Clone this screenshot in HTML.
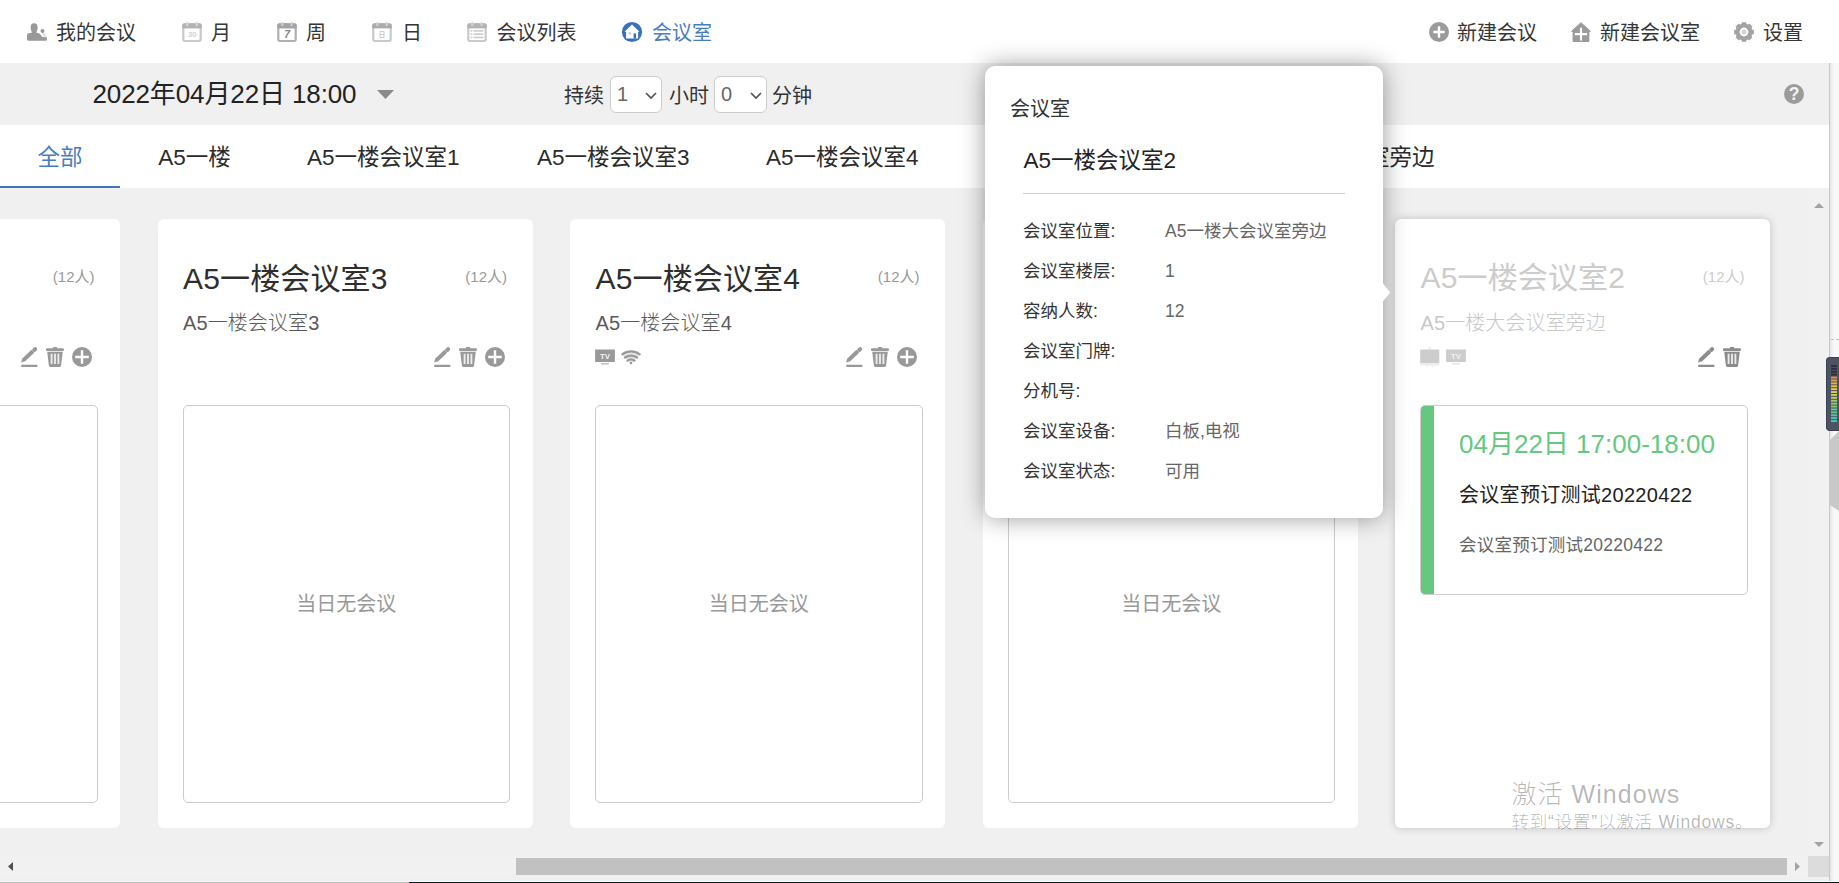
<!DOCTYPE html>
<html lang="zh-CN">
<head>
<meta charset="utf-8">
<title>会议室</title>
<style>
*{box-sizing:border-box;margin:0;padding:0}
html,body{width:1839px;height:883px;overflow:hidden;background:#f0f0f0}
body{font-family:"Liberation Sans","Noto Sans CJK SC",sans-serif;color:#333;position:relative}
svg{display:block;overflow:visible}
#nav{position:absolute;left:0;top:0;width:1839px;height:63px;background:#fff}
.ni{position:absolute;top:0;height:63px;line-height:66px;font-size:20px;color:#363636;white-space:nowrap}
.ni svg{position:absolute;top:22px;left:-29px}
.ni.act{color:#4a7cc0}
#bar{position:absolute;left:0;top:63px;width:1839px;height:62px;background:#f0f0f0}
#date{position:absolute;left:92.5px;top:14px;letter-spacing:-.12px;font-size:26px;line-height:34px;color:#222;white-space:nowrap}
.bt{position:absolute;top:0;height:62px;line-height:66px;font-size:20px;color:#333;white-space:nowrap}
.sel{position:absolute;top:13px;height:37px;border:1px solid #ccc;border-radius:6px;background:#fff;font-size:20px;line-height:35px;color:#666;padding-left:6px}
.sel svg{position:absolute;top:14.5px;right:4.5px}
#tabs{position:absolute;left:0;top:125px;width:1829px;height:63px;background:#fff}
.tab{position:absolute;top:0;height:63px;line-height:65px;font-size:22.5px;color:#2b2b2b;white-space:nowrap}
.tab.act{color:#4a7cc0}
#tabline{position:absolute;left:0;top:60.5px;width:120px;height:2.5px;background:#3f74bd}
.card{position:absolute;top:219px;width:375px;height:609px;background:#fff;border-radius:6px}
.card h2{position:absolute;left:25.5px;letter-spacing:.15px;top:38px;font-size:30px;line-height:44px;font-weight:400;color:#2e2e2e;white-space:nowrap}
.card .cap{position:absolute;right:25.5px;top:48px;font-size:15px;line-height:20px;color:#999;white-space:nowrap}
.card .loc{position:absolute;left:25.5px;top:89.5px;letter-spacing:.1px;font-size:20px;line-height:28px;color:#5a5a5a;font-weight:300;white-space:nowrap}
.card .box{position:absolute;left:25px;top:186px;width:327.5px;height:397.7px;border:1px solid #ccc;border-radius:5px;background:#fff}
.card .none{position:absolute;left:0;width:100%;top:185px;text-align:center;font-size:20px;line-height:26px;color:#999}
.card .ops{position:absolute;top:128px;right:28px;height:22px;width:72px}
.card .ops svg,.card .eq svg{position:absolute;top:0}
.card .eq{position:absolute;top:127px;left:25px;height:22px}
.card.hov{box-shadow:0 0 8px rgba(0,0,0,.2)}
.card.hov h2,.card.hov .cap{color:#ccc}
.card.hov h2{top:37px}
.card.hov .loc{color:#c8c8c8}
#pop{position:absolute;left:985px;top:66px;width:398px;height:452px;background:#fff;border-radius:10px;box-shadow:0 0 25px rgba(0,0,0,.4)}
#pop .t{position:absolute;left:25px;top:30px;font-size:20px;line-height:26px;color:#333}
#pop .n{position:absolute;left:38.5px;top:79.5px;font-size:22.5px;line-height:30px;color:#222;white-space:nowrap}
#pop .hr{position:absolute;left:38px;top:127px;width:322px;height:1px;background:#ccc}
#pop .r{position:absolute;left:38px;height:40px;line-height:40px;font-size:17.5px;color:#333;white-space:nowrap}
#pop .r span{position:absolute;left:142px;top:0;color:#666}

.mt{position:absolute;left:25px;top:186px;width:328px;height:190px;border:1px solid #ccc;border-radius:5px;background:#fff;overflow:hidden}
.mt i{position:absolute;left:0;top:0;width:13px;height:100%;background:#66c87f}
.mt div{position:absolute;left:38px;white-space:nowrap}
.m1{top:21px;font-size:26px;line-height:34px;color:#66c87f}
.m2{top:75px;letter-spacing:.3px;font-size:20px;line-height:28px;color:#222}
.m3{top:126px;letter-spacing:.25px;font-size:17.5px;line-height:26px;color:#666}
#vsb{position:absolute;left:1808px;top:188px;width:21px;height:668px;background:#f1f1f1}
#hsb{position:absolute;left:0;top:856px;width:1808px;height:21px;background:#f1f1f1}
#hth{position:absolute;left:516px;top:2px;width:1271px;height:17px;background:#c1c1c1}
#corner{position:absolute;left:1808px;top:856px;width:21px;height:21px;background:#dcdcdc}
#side{position:absolute;left:1829px;top:63px;width:10px;height:820px;background:linear-gradient(to right,#e6e6e6,#f8f8f8 4px);border-left:1px solid #c8c8c8}
#wid{position:absolute;left:1826px;top:357px;width:14px;height:74px;background:#4d5363;border:1px solid #3c4150;border-right:0;border-radius:4px 0 0 4px}
#trap{position:absolute;left:1830px;top:431px}
#btm{position:absolute;left:0;top:882px;width:1839px;height:1px;background:#c0c0c0}
#btm b{position:absolute;left:409px;top:-1px;width:1430px;height:2px;background:#06161f;border-top:1px solid #fff}
#wm{position:absolute;left:1511.5px;top:776.5px;color:rgba(0,0,0,.29);white-space:nowrap;font-weight:300}
#wm .a{font-size:25px;line-height:34px;letter-spacing:1.05px}
#wm .b{font-size:17.5px;line-height:22px;margin-top:0;letter-spacing:.8px}
#arrow{position:absolute;left:1382px;top:282px}
#side u{position:absolute;left:1px;top:276px;width:3px;height:1px;background:#c4c4c4}
</style>
</head>
<body>
<div id="nav">
  <div class="ni" style="left:56px"><svg style="left:-29px;top:23px" width="20" height="18" viewBox="0 0 20 18"><ellipse cx="7.100" cy="4.600" rx="3.500" ry="4.400" fill="#999"/><rect x="4.600" y="7" width="5" height="4" fill="#999"/><path fill="#999" d="M0 12.400C0 11 0.800 10.300 3.200 10.100L10.800 10.100C13 10.600 14.200 12.300 15.200 14L18.600 14C19.600 14 20 14.700 20 15.500V16.600C20 17.400 19.500 17.800 18.800 17.800H1.200C0.500 17.800 0 17.400 0 16.600Z"/><path d="M15.800 9.600l2.400 4" stroke="#dcdcdc" stroke-width="1.900" stroke-linecap="round"/><circle cx="15.500" cy="8.100" r="2" fill="#999"/></svg>我的会议</div>
  <div class="ni" style="left:211px"><svg style="left:-29px;top:22px" width="20" height="20" viewBox="0 0 20 20"><rect x="0.200" y="1.200" width="19.600" height="18.700" rx="2.600" fill="#c9c9c9"/><path d="M0.200 3.800a2.600 2.600 0 0 1 2.600-2.600h14.400a2.600 2.600 0 0 1 2.600 2.600v2.400H0.200z" fill="#b3b3b3"/><rect x="2.400" y="6.600" width="15.200" height="11.300" rx=".6" fill="#fff"/><rect x="4.700" y="0" width="1.300" height="3.800" rx=".6" fill="#b3b3b3" stroke="#ececec" stroke-width=".7"/><rect x="14" y="0" width="1.300" height="3.800" rx=".6" fill="#b3b3b3" stroke="#ececec" stroke-width=".7"/><text x="10.200" y="15.100" font-family="Liberation Sans,sans-serif" font-size="7.600" font-weight="bold" text-anchor="middle" fill="#d2d2d2">30</text></svg>月</div>
  <div class="ni" style="left:306px"><svg style="left:-29px;top:22px" width="20" height="20" viewBox="0 0 20 20"><rect x="0.200" y="1.200" width="19.600" height="18.700" rx="2.600" fill="#b0b0b0"/><path d="M0.200 3.800a2.600 2.600 0 0 1 2.600-2.600h14.400a2.600 2.600 0 0 1 2.600 2.600v2.400H0.200z" fill="#a4a4a4"/><rect x="2.400" y="6.600" width="15.200" height="11.300" rx=".6" fill="#fff"/><rect x="4.700" y="0" width="1.300" height="3.800" rx=".6" fill="#a4a4a4" stroke="#ececec" stroke-width=".7"/><rect x="14" y="0" width="1.300" height="3.800" rx=".6" fill="#a4a4a4" stroke="#ececec" stroke-width=".7"/><text x="10.200" y="15.900" font-family="Liberation Sans,sans-serif" font-size="10.500" font-weight="bold" font-style="italic" text-anchor="middle" fill="#858585">7</text></svg>周</div>
  <div class="ni" style="left:402px"><svg style="left:-30px;top:22px" width="20" height="20" viewBox="0 0 20 20"><rect x="0.200" y="1.200" width="19.600" height="18.700" rx="2.600" fill="#c9c9c9"/><path d="M0.200 3.800a2.600 2.600 0 0 1 2.600-2.600h14.400a2.600 2.600 0 0 1 2.600 2.600v2.400H0.200z" fill="#ababab"/><rect x="2.400" y="6.600" width="15.200" height="11.300" rx=".6" fill="#fff"/><rect x="4.700" y="0" width="1.300" height="3.800" rx=".6" fill="#ababab" stroke="#ececec" stroke-width=".7"/><rect x="14" y="0" width="1.300" height="3.800" rx=".6" fill="#ababab" stroke="#ececec" stroke-width=".7"/><text x="10" y="14.700" font-family="Liberation Sans,Noto Sans CJK SC,sans-serif" font-size="6.500" font-weight="bold" text-anchor="middle" fill="#c6c6c6">日</text></svg>日</div>
  <div class="ni" style="left:496.5px"><svg style="left:-30px;top:22px" width="20" height="20" viewBox="0 0 20 20"><rect x="0.200" y="1.200" width="19.600" height="18.700" rx="2.600" fill="#c9c9c9"/><path d="M0.200 3.800a2.600 2.600 0 0 1 2.600-2.600h14.400a2.600 2.600 0 0 1 2.600 2.600v2.400H0.200z" fill="#b3b3b3"/><rect x="2.400" y="6.600" width="15.200" height="11.300" rx=".6" fill="#fff"/><rect x="4.700" y="0" width="1.300" height="3.800" rx=".6" fill="#b3b3b3" stroke="#ececec" stroke-width=".7"/><rect x="14" y="0" width="1.300" height="3.800" rx=".6" fill="#b3b3b3" stroke="#ececec" stroke-width=".7"/><g fill="#cdcdcd"><rect x="3.600" y="8" width="1.800" height="1.700"/><rect x="6.600" y="8" width="9.800" height="1.700"/><rect x="3.600" y="11.300" width="1.800" height="1.700"/><rect x="6.600" y="11.300" width="9.800" height="1.700"/><rect x="3.600" y="14.600" width="1.800" height="1.700"/><rect x="6.600" y="14.600" width="9.800" height="1.700"/></g></svg>会议列表</div>
  <div class="ni act" style="left:652px"><svg style="left:-30px;top:22px" width="20" height="20" viewBox="0 0 20 20"><circle cx="10" cy="10" r="10.100" fill="#3872ba"/><path fill="#fff" d="M10 2.400l7.500 7.300h-1.400v6.700H4.100V9.700H2.500z"/><rect x="11.600" y="11.400" width="2.500" height="5.100" fill="#3872ba"/><rect x="6.700" y="10.400" width="2.100" height="1.900" fill="#9dbbe0"/></svg>会议室</div>
  <div class="ni" style="left:1457px"><svg style="left:-28px;top:22px" width="20" height="20" viewBox="0 0 20 20"><circle cx="10" cy="10" r="10" fill="#9b9b9b"/><path d="M10 4.300v11.400M4.300 10h11.400" stroke="#fff" stroke-width="2.400"/></svg>新建会议</div>
  <div class="ni" style="left:1600px"><svg style="left:-29px;top:22px" width="20" height="20" viewBox="0 0 20 20"><path fill="#9b9b9b" stroke="#9b9b9b" stroke-width="1" stroke-linejoin="round" d="M10 0.700L19.400 9.300h-1.500V19.500H2.100V9.300H0.600z"/><path d="M10 5.800v12.600M3.900 12.200h12.200" stroke="#fff" stroke-width="2.200"/></svg>新建会议室</div>
  <div class="ni" style="left:1763px"><svg style="left:-29px;top:22px" width="20" height="20" viewBox="0 0 20 20"><path fill="#a3a3a3" stroke="#a3a3a3" stroke-width="1.200" stroke-linejoin="round" d="M19.26 8.38L19.26 11.62L17.78 11.87L16.82 14.18L17.69 15.41L15.41 17.69L14.18 16.82L11.87 17.78L11.62 19.26L8.38 19.26L8.13 17.78L5.82 16.82L4.59 17.69L2.31 15.41L3.18 14.18L2.22 11.87L0.74 11.62L0.74 8.38L2.22 8.13L3.18 5.82L2.31 4.59L4.59 2.31L5.82 3.18L8.13 2.22L8.38 0.74L11.62 0.74L11.87 2.22L14.18 3.18L15.41 2.31L17.69 4.59L16.82 5.82L17.78 8.13Z"/><circle cx="10" cy="10" r="4.400" fill="#fff"/><circle cx="10" cy="10" r="2.500" fill="#d4d4d4"/></svg>设置</div>
</div>
<div id="bar">
  <svg style="position:absolute;left:377px;top:27px" width="17" height="9" viewBox="0 0 17 9"><path d="M0 0h17L8.500 9z" fill="#8a8a8a"/></svg><svg style="position:absolute;left:1784px;top:21px" width="20" height="20" viewBox="0 0 20 20"><circle cx="10" cy="10" r="10" fill="#9b9b9b"/><text x="10" y="16.200" font-family="Liberation Sans,sans-serif" font-size="17.500" font-weight="bold" text-anchor="middle" fill="#f4f4f4">?</text></svg><div id="date">2022年04月22日 18:00</div>
  <div class="bt" style="left:564px">持续</div>
  <div class="sel" style="left:610px;width:52px">1<svg width="12" height="8" viewBox="0 0 12 8"><path d="M1 1l5 5 5-5" fill="none" stroke="#555" stroke-width="1.700"/></svg></div>
  <div class="bt" style="left:669px">小时</div>
  <div class="sel" style="left:714px;width:53px">0<svg width="12" height="8" viewBox="0 0 12 8"><path d="M1 1l5 5 5-5" fill="none" stroke="#555" stroke-width="1.700"/></svg></div>
  <div class="bt" style="left:772px">分钟</div>
</div>
<div id="tabs">
  <div class="tab act" style="left:37.5px">全部</div>
  <div class="tab" style="left:158.3px">A5一楼</div>
  <div class="tab" style="left:307px">A5一楼会议室1</div>
  <div class="tab" style="left:537px">A5一楼会议室3</div>
  <div class="tab" style="left:766px">A5一楼会议室4</div>
  <div class="tab" style="left:996px">A5一楼会议室2</div>
  <div class="tab" style="left:1227px">A5一楼大会议室旁边</div>
  <div id="tabline"></div>
</div>
<div id="cards">
<div class="card" style="left:-255px"><h2>A5一楼会议室1</h2><span class="cap">(12人)</span><div class="loc">A5一楼会议室1</div><div class="ops"><svg style="left:1px" width="18" height="21" viewBox="0 0 18 21"><path fill="#999" d="M0.00 15.50L4.16 14.37L13.22 5.77L10.40 2.80L1.34 11.40Z"/><path d="M13.19 2.98L14.21 2.01" stroke="#999" stroke-width="4" stroke-linecap="round"/><rect x="0.300" y="17.800" width="16" height="2.100" rx=".5" fill="#999"/></svg><svg style="left:26px" width="18" height="21" viewBox="0 0 18 21"><rect x="6.900" y="0" width="4.400" height="2.500" rx="1" fill="#999"/><rect x="0" y="1.300" width="17.900" height="2.700" rx=".9" fill="#999"/><path fill="#999" d="M1.200 4.800h15.600l-1.700 13.800c-.1.800-.6 1.300-1.400 1.300H4.300c-.8 0-1.300-.5-1.400-1.300z"/><path d="M5.600 6.700v10.400M9 6.700v10.400M12.400 6.700v10.400" stroke="#ececec" stroke-width="1.900"/></svg><svg style="left:52px" width="20" height="20" viewBox="0 0 20 20"><circle cx="10" cy="10" r="10" fill="#999"/><path d="M10 3.200v13.600M3.200 10h13.600" stroke="#fff" stroke-width="2.400"/></svg></div><div class="box"><div class="none">当日无会议</div></div></div>
<div class="card" style="left:157.5px"><h2>A5一楼会议室3</h2><span class="cap">(12人)</span><div class="loc">A5一楼会议室3</div><div class="ops"><svg style="left:1px" width="18" height="21" viewBox="0 0 18 21"><path fill="#999" d="M0.00 15.50L4.16 14.37L13.22 5.77L10.40 2.80L1.34 11.40Z"/><path d="M13.19 2.98L14.21 2.01" stroke="#999" stroke-width="4" stroke-linecap="round"/><rect x="0.300" y="17.800" width="16" height="2.100" rx=".5" fill="#999"/></svg><svg style="left:26px" width="18" height="21" viewBox="0 0 18 21"><rect x="6.900" y="0" width="4.400" height="2.500" rx="1" fill="#999"/><rect x="0" y="1.300" width="17.900" height="2.700" rx=".9" fill="#999"/><path fill="#999" d="M1.200 4.800h15.600l-1.700 13.800c-.1.800-.6 1.300-1.400 1.300H4.300c-.8 0-1.300-.5-1.400-1.300z"/><path d="M5.600 6.700v10.400M9 6.700v10.400M12.400 6.700v10.400" stroke="#ececec" stroke-width="1.900"/></svg><svg style="left:52px" width="20" height="20" viewBox="0 0 20 20"><circle cx="10" cy="10" r="10" fill="#999"/><path d="M10 3.200v13.600M3.200 10h13.600" stroke="#fff" stroke-width="2.400"/></svg></div><div class="box"><div class="none">当日无会议</div></div></div>
<div class="card" style="left:570px"><h2>A5一楼会议室4</h2><span class="cap">(12人)</span><div class="loc">A5一楼会议室4</div><div class="eq"><svg style="left:0px;top:3px" width="20" height="16" viewBox="0 0 20 16"><rect x="0.100" y="0.400" width="19.800" height="12.500" rx=".3" fill="#999"/><rect x="6.100" y="14.100" width="7.800" height="1.400" rx=".4" fill="#bdbdbd"/><text x="10" y="9.700" font-family="Liberation Sans,sans-serif" font-size="7.800" font-weight="bold" text-anchor="middle" fill="#f2f2f2">TV</text></svg><svg style="left:26px;top:4.200px" width="20" height="15" viewBox="0 0 20 15"><path d="M0.900 4.600A13.900 13.900 0 0 1 19.100 4.600L10 14.200z" fill="#e6e6e6"/><g fill="none" stroke="#999" stroke-width="2.200" stroke-linecap="round"><path d="M1.300 4.400A13.900 13.900 0 0 1 18.700 4.400"/><path d="M3.900 7.500A11.900 11.900 0 0 1 16.100 7.500"/><path d="M6.500 10.700A5.600 5.600 0 0 1 13.500 10.700"/></g><circle cx="10" cy="13.100" r="1.250" fill="#999"/></svg></div><div class="ops"><svg style="left:1px" width="18" height="21" viewBox="0 0 18 21"><path fill="#999" d="M0.00 15.50L4.16 14.37L13.22 5.77L10.40 2.80L1.34 11.40Z"/><path d="M13.19 2.98L14.21 2.01" stroke="#999" stroke-width="4" stroke-linecap="round"/><rect x="0.300" y="17.800" width="16" height="2.100" rx=".5" fill="#999"/></svg><svg style="left:26px" width="18" height="21" viewBox="0 0 18 21"><rect x="6.900" y="0" width="4.400" height="2.500" rx="1" fill="#999"/><rect x="0" y="1.300" width="17.900" height="2.700" rx=".9" fill="#999"/><path fill="#999" d="M1.200 4.800h15.600l-1.700 13.800c-.1.800-.6 1.300-1.400 1.300H4.300c-.8 0-1.300-.5-1.400-1.300z"/><path d="M5.600 6.700v10.400M9 6.700v10.400M12.400 6.700v10.400" stroke="#ececec" stroke-width="1.900"/></svg><svg style="left:52px" width="20" height="20" viewBox="0 0 20 20"><circle cx="10" cy="10" r="10" fill="#999"/><path d="M10 3.200v13.600M3.200 10h13.600" stroke="#fff" stroke-width="2.400"/></svg></div><div class="box"><div class="none">当日无会议</div></div></div>
<div class="card" style="left:982.5px"><h2>A5一楼</h2><span class="cap">(12人)</span><div class="loc">A5一楼</div><div class="ops"><svg style="left:1px" width="18" height="21" viewBox="0 0 18 21"><path fill="#999" d="M0.00 15.50L4.16 14.37L13.22 5.77L10.40 2.80L1.34 11.40Z"/><path d="M13.19 2.98L14.21 2.01" stroke="#999" stroke-width="4" stroke-linecap="round"/><rect x="0.300" y="17.800" width="16" height="2.100" rx=".5" fill="#999"/></svg><svg style="left:26px" width="18" height="21" viewBox="0 0 18 21"><rect x="6.900" y="0" width="4.400" height="2.500" rx="1" fill="#999"/><rect x="0" y="1.300" width="17.900" height="2.700" rx=".9" fill="#999"/><path fill="#999" d="M1.200 4.800h15.600l-1.700 13.800c-.1.800-.6 1.300-1.400 1.300H4.300c-.8 0-1.300-.5-1.400-1.300z"/><path d="M5.600 6.700v10.400M9 6.700v10.400M12.400 6.700v10.400" stroke="#ececec" stroke-width="1.900"/></svg><svg style="left:52px" width="20" height="20" viewBox="0 0 20 20"><circle cx="10" cy="10" r="10" fill="#999"/><path d="M10 3.200v13.600M3.200 10h13.600" stroke="#fff" stroke-width="2.400"/></svg></div><div class="box"><div class="none">当日无会议</div></div></div>
<div class="card hov" style="left:1395px"><h2>A5一楼会议室2</h2><span class="cap">(12人)</span><div class="loc">A5一楼大会议室旁边</div><div class="eq"><svg style="left:0px" width="20" height="21" viewBox="0 0 20 21"><rect x="8.600" y="1.300" width="2.100" height="2.300" fill="#ececec"/><rect x="0.200" y="3.600" width="19.100" height="13.400" rx=".3" fill="#cdcdcd"/><rect x="0.200" y="17" width="19.100" height="2.500" fill="#ececec"/><path d="M7.500 19.500l-1 1.400M12 19.500l1 1.400" stroke="#ececec" stroke-width="1.500"/></svg><svg style="left:26.2px;top:3px" width="20" height="16" viewBox="0 0 20 16"><rect x="0.100" y="0.400" width="19.800" height="12.500" rx=".3" fill="#cdcdcd"/><rect x="6.100" y="14.100" width="7.800" height="1.400" rx=".4" fill="#e6e6e6"/><text x="10" y="9.700" font-family="Liberation Sans,sans-serif" font-size="7.800" font-weight="bold" text-anchor="middle" fill="#f2f2f2">TV</text></svg></div><div class="ops"><svg style="left:27.5px" width="18" height="21" viewBox="0 0 18 21"><path fill="#8c8c8c" d="M0.00 15.50L4.16 14.37L13.22 5.77L10.40 2.80L1.34 11.40Z"/><path d="M13.19 2.98L14.21 2.01" stroke="#8c8c8c" stroke-width="4" stroke-linecap="round"/><rect x="0.300" y="17.800" width="16" height="2.100" rx=".5" fill="#8c8c8c"/></svg><svg style="left:53.2px" width="18" height="21" viewBox="0 0 18 21"><rect x="6.900" y="0" width="4.400" height="2.500" rx="1" fill="#8c8c8c"/><rect x="0" y="1.300" width="17.900" height="2.700" rx=".9" fill="#8c8c8c"/><path fill="#8c8c8c" d="M1.200 4.800h15.600l-1.700 13.800c-.1.800-.6 1.300-1.400 1.300H4.300c-.8 0-1.300-.5-1.400-1.300z"/><path d="M5.600 6.700v10.400M9 6.700v10.400M12.400 6.700v10.400" stroke="#ececec" stroke-width="1.900"/></svg></div><div class="mt"><i></i><div class="m1">04月22日 17:00-18:00</div><div class="m2">会议室预订测试20220422</div><div class="m3">会议室预订测试20220422</div></div></div>
</div>
<div id="vsb"><svg style="position:absolute;left:6px;top:15px" width="10" height="5" viewBox="0 0 10 5"><path d="M0 5h10L5 0z" fill="#a3a3a3"/></svg><svg style="position:absolute;left:6px;top:654px" width="10" height="5" viewBox="0 0 10 5"><path d="M0 0h10L5 5z" fill="#a3a3a3"/></svg></div><div id="hsb"><svg style="position:absolute;left:8px;top:6px" width="5" height="9" viewBox="0 0 5 9"><path d="M5 0v9L0 4.500z" fill="#505050"/></svg><div id="hth"></div><svg style="position:absolute;left:1795px;top:6px" width="5" height="9" viewBox="0 0 5 9"><path d="M0 0v9l5-4.500z" fill="#a3a3a3"/></svg></div><div id="corner"></div><div id="side"><u></u><u style="left:6px"></u></div><svg style="position:absolute;left:1830px;top:431px" width="9" height="80" viewBox="0 0 9 80"><path d="M0 9L9 0v80L0 74z" fill="#c8c8c8"/></svg><div id="wid"><svg style="position:absolute;left:4px;top:7px" width="6" height="60" viewBox="0 0 6 60"><rect x="0" y="0.0" width="6" height="1.900" fill="#2e3038"/><rect x="0" y="2.9" width="6" height="1.900" fill="#2e3038"/><rect x="0" y="5.8" width="6" height="1.900" fill="#2e3038"/><rect x="0" y="8.7" width="6" height="1.900" fill="#2e3038"/><rect x="0" y="11.6" width="6" height="1.900" fill="#e8924a"/><rect x="0" y="14.5" width="6" height="1.900" fill="#e8a04a"/><rect x="0" y="17.4" width="6" height="1.900" fill="#e8b04a"/><rect x="0" y="20.3" width="6" height="1.900" fill="#e6bf45"/><rect x="0" y="23.2" width="6" height="1.900" fill="#e3cc45"/><rect x="0" y="26.1" width="6" height="1.900" fill="#d6cf4a"/><rect x="0" y="29.0" width="6" height="1.900" fill="#c6d050"/><rect x="0" y="31.9" width="6" height="1.900" fill="#b4d058"/><rect x="0" y="34.8" width="6" height="1.900" fill="#a2cf62"/><rect x="0" y="37.7" width="6" height="1.900" fill="#8fcd6c"/><rect x="0" y="40.6" width="6" height="1.900" fill="#7ccb78"/><rect x="0" y="43.5" width="6" height="1.900" fill="#6cc985"/><rect x="0" y="46.4" width="6" height="1.900" fill="#5cc895"/><rect x="0" y="49.3" width="6" height="1.900" fill="#50c8a5"/><rect x="0" y="52.2" width="6" height="1.900" fill="#48c8b5"/><rect x="0" y="55.1" width="6" height="1.900" fill="#40c8c2"/></svg></div><div id="wm"><div class="a">激活 Windows</div><div class="b">转到“设置”以激活 Windows。</div></div><div id="btm"><b></b></div>
<div id="pop"><svg style="position:absolute;left:396px;top:217px" width="10" height="20" viewBox="0 0 10 20"><path d="M0 0L1.600 0L9.300 9.400L1.600 18.800L0 18.800z" fill="#fff"/></svg>
  <div class="t">会议室</div>
  <div class="n">A5一楼会议室2</div>
  <div class="hr"></div>
  <div class="r" style="top:145px">会议室位置:<span>A5一楼大会议室旁边</span></div>
  <div class="r" style="top:185px">会议室楼层:<span>1</span></div>
  <div class="r" style="top:225px">容纳人数:<span>12</span></div>
  <div class="r" style="top:265px">会议室门牌:</div>
  <div class="r" style="top:305px">分机号:</div>
  <div class="r" style="top:345px">会议室设备:<span>白板,电视</span></div>
  <div class="r" style="top:385px">会议室状态:<span>可用</span></div>
</div>
</body>
</html>
